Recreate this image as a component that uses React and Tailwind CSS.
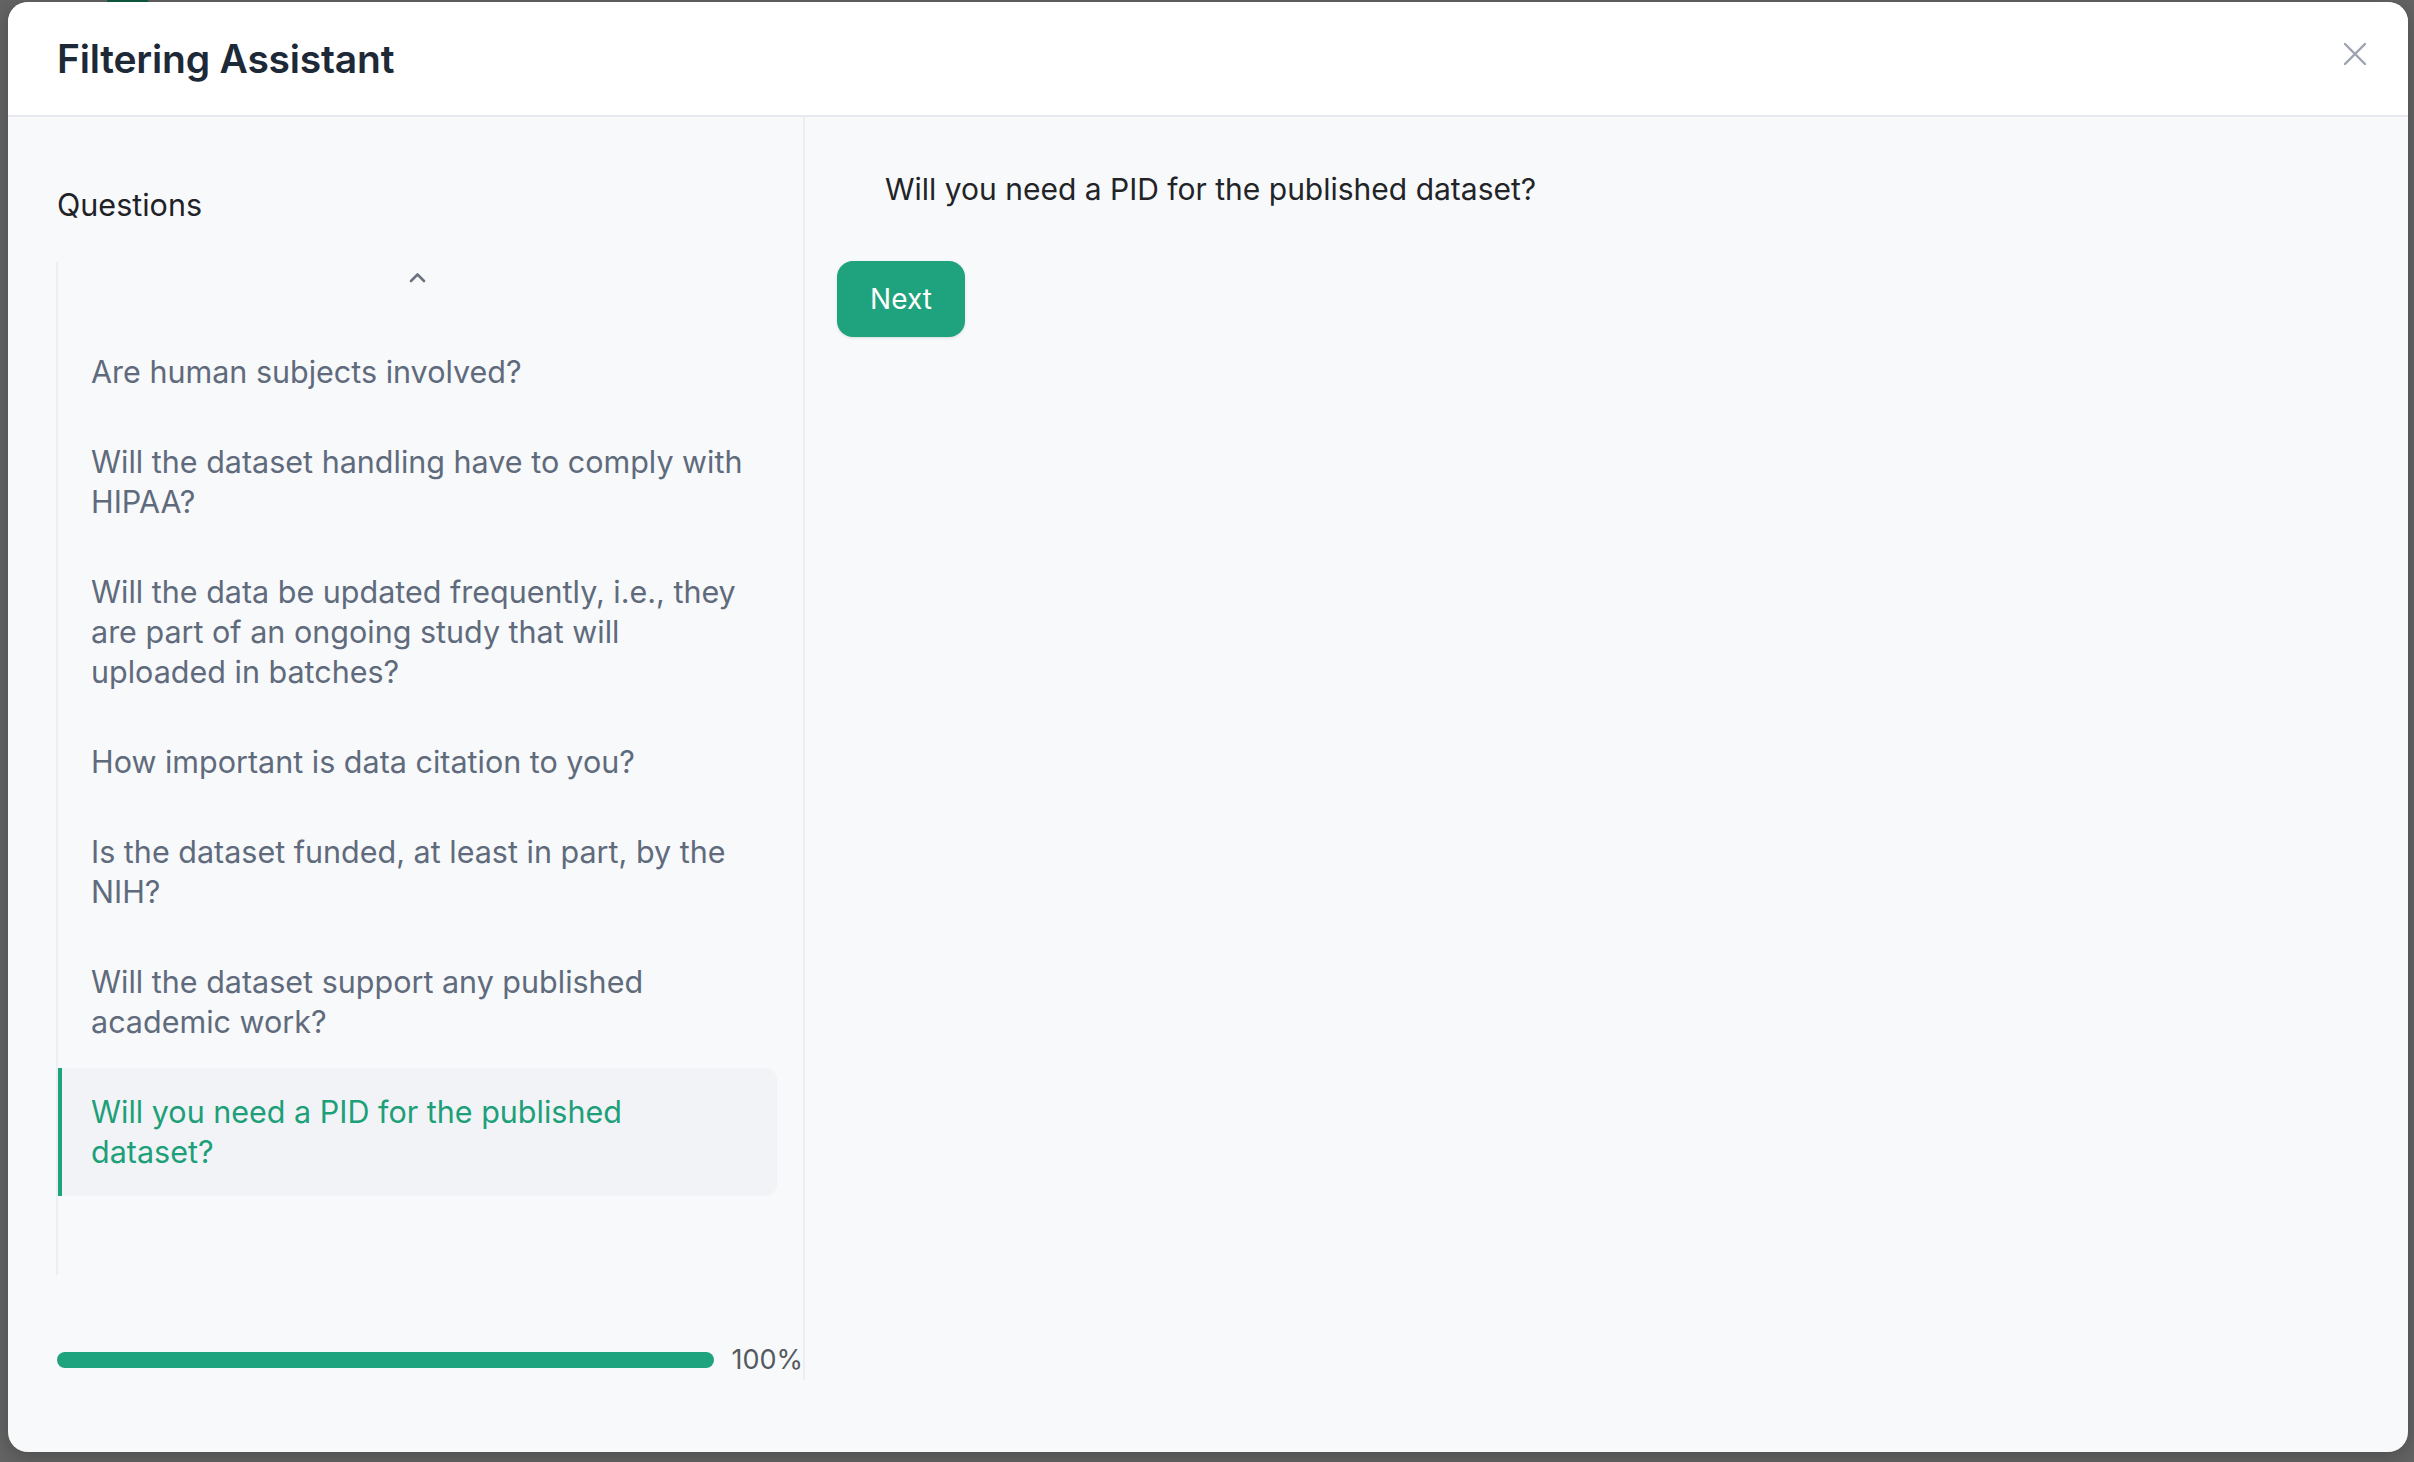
import React from "react";

const questions = [
  "Are human subjects involved?",
  "Will the dataset handling have to comply with HIPAA?",
  "Will the data be updated frequently, i.e., they are part of an ongoing study that will uploaded in batches?",
  "How important is data citation to you?",
  "Is the dataset funded, at least in part, by the NIH?",
  "Will the dataset support any published academic work?",
  "Will you need a PID for the published dataset?",
];

const activeIndex = 6;

function CloseIcon() {
  return (
    <svg width="24" height="24" viewBox="0 0 24 24" fill="none" stroke="#9ca3af" strokeWidth="2.4" strokeLinecap="round">
      <path d="M2 2 L22 22" />
      <path d="M22 2 L2 22" />
    </svg>
  );
}

function ChevronUp() {
  return (
    <svg width="17" height="11" viewBox="0 0 17 11" fill="none" stroke="#6b7280" strokeWidth="2.6" strokeLinecap="round" strokeLinejoin="round">
      <path d="M2 9 L8.5 2.5 L15 9" />
    </svg>
  );
}

export default function App() {
  return (
    <div className="w-[2414px] h-[1462px] bg-[#646464] flex flex-col overflow-hidden [font-family:Inter,'Noto_Sans',sans-serif]">
      {/* page behind the overlay peeks out along the top edge */}
      <div className="h-[2px] flex shrink-0">
        <div className="ml-[107px] w-[41px] h-[2px] bg-[#0f5c3f]" />
      </div>

      <div className="ml-[8px] w-[2400px] h-[1450px] rounded-[20px] bg-[#f8f9fb] overflow-hidden flex flex-col shadow-[0_4px_20px_rgba(0,0,0,0.25)]">
        {/* header */}
        <div className="h-[115px] shrink-0 bg-white border-b-2 border-[#e8e9ee] flex items-center justify-between pl-[49px] pr-[41px]">
          <h1 className="text-[39px] leading-[48px] font-semibold text-[#1e2938] tracking-[-0.2px]">Filtering Assistant</h1>
          <button className="self-start mt-[40px] w-[24px] h-[24px] flex items-center justify-center">
            <CloseIcon />
          </button>
        </div>

        {/* body */}
        <div className="flex-1 flex pb-[72px]">
          {/* question list */}
          <div className="w-[797px] shrink-0 border-r-2 border-[#eceef1] flex flex-col pl-[48px] pt-[68px]">
            <h2 className="text-[30.5px] leading-[40px] text-[#1f2328] ml-[1px]">Questions</h2>

            <div className="mt-[37px] mr-[26px] h-[1013px] border-l-2 border-[#eceef1] flex flex-col">
              <div className="h-[66px] flex justify-center pt-[10px] shrink-0">
                <ChevronUp />
              </div>
              <div className="flex flex-col gap-[2px]">
                {questions.map((q, i) =>
                  i === activeIndex ? (
                    <div
                      key={i}
                      className="border-l-4 border-[#1fa37e] bg-[#f2f3f6] rounded-r-[12px] pl-[29px] pr-[30px] py-[24px] text-[30.5px] leading-[40px] text-[#1d9f79]"
                    >
                      {q}
                    </div>
                  ) : (
                    <div
                      key={i}
                      className="border-l-4 border-transparent pl-[29px] pr-[30px] py-[24px] text-[30.5px] leading-[40px] text-[#5f6b7c]"
                    >
                      {q}
                    </div>
                  )
                )}
              </div>
            </div>

            <div className="mt-auto h-[40px] flex items-center gap-[17px] ml-[1px]">
              <div className="flex-1 h-[16px] rounded-full bg-[#1fa37e]" />
              <span className="text-[27px] leading-[40px] text-[#555a61]">100%</span>
            </div>
          </div>

          {/* current question */}
          <div className="flex-1 flex flex-col items-start pl-[32px] pt-[52px]">
            <p className="ml-[48px] text-[30px] leading-[40px] text-[#222428]">Will you need a PID for the published dataset?</p>
            <button className="mt-[52px] w-[128px] h-[76px] rounded-[16px] bg-[#1fa37e] text-white text-[28px] shadow-[0_1px_3px_rgba(0,0,0,0.12)]">
              Next
            </button>
          </div>
        </div>
      </div>
    </div>
  );
}
